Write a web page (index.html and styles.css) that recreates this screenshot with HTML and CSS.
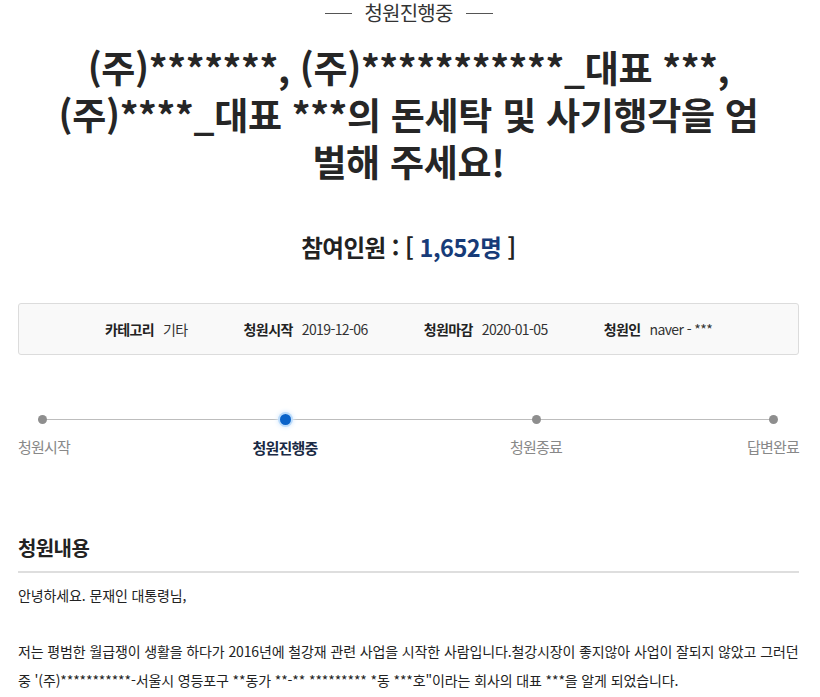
FILE: index.html
```html
<!DOCTYPE html>
<html lang="ko">
<head>
<meta charset="utf-8">
<link rel="stylesheet" href="styles.css">
</head>
<body>
<div class="page">
  <div class="status"><span class="dash"></span><span class="status-text">청원진행중</span><span class="dash"></span></div>
  <h1 class="title">(주)*******, (주)***********_대표 ***,<br>(주)****_대표 ***의 돈세탁 및 사기행각을 엄<br>벌해 주세요!</h1>
  <div class="count">참여인원 : [ <span class="num">1,652명</span> ]</div>
  <div class="info">
    <div class="item"><b>카테고리</b><span>기타</span></div>
    <div class="item"><b>청원시작</b><span>2019-12-06</span></div>
    <div class="item"><b>청원마감</b><span>2020-01-05</span></div>
    <div class="item"><b>청원인</b><span>naver - ***</span></div>
  </div>
  <div class="progress">
    <div class="track"></div>
    <div class="step s1"><i class="dot"></i><span>청원시작</span></div>
    <div class="step s2 on"><i class="dot"></i><span>청원진행중</span></div>
    <div class="step s3"><i class="dot"></i><span>청원종료</span></div>
    <div class="step s4"><i class="dot"></i><span>답변완료</span></div>
  </div>
  <h2 class="section">청원내용</h2>
  <div class="content">
    <p>안녕하세요. 문재인 대통령님,</p>
    <p>저는 평범한 월급쟁이 생활을 하다가 2016년에 철강재 관련 사업을 시작한 사람입니다.철강시장이 좋지않아 사업이 잘되지 않았고 그러던 중 '(주)***********-서울시 영등포구 **동가 **-** ********* *동 ***호"이라는 회사의 대표 ***을 알게 되었습니다.</p>
  </div>
</div>
</body>
</html>
```
FILE: styles.css
```css
html, body { margin: 0; padding: 0; background: #fff; }
body { font-family: "Noto Sans CJK KR", "Noto Sans", sans-serif; color: #222; }
.page { padding: 0 21px 0 18px; }
.status { display: flex; justify-content: center; align-items: center; gap: 13px; height: 20px; padding-top: 3px; padding-bottom: 3px; }
.dash { width: 27px; height: 1px; background: #555; }
.status-text { font-size: 20px; color: #333; letter-spacing: -0.8px; line-height: 20px; }
.title { margin: 18px 0 0; text-align: center; font-size: 37px; line-height: 47px; font-weight: 700; color: #262626; letter-spacing: -0.3px; }
.count { margin-top: 47px; text-align: center; font-size: 23.5px; font-weight: 700; line-height: 30px; color: #222; letter-spacing: -0.5px; }
.count .num { color: #173b78; }
.info { margin-top: 41px; height: 50px; border: 1px solid #dcdcdc; border-radius: 3px; background: #f9f9f9; display: flex; justify-content: center; align-items: center; gap: 56px; font-size: 14px; color: #333; letter-spacing: -0.6px; }
.info .item b { font-weight: 700; margin-right: 9px; color: #222; }
.progress { position: relative; height: 71px; margin-top: 54px; }
.track { position: absolute; left: 25px; right: 25px; top: 10px; height: 1px; background: #bdbdbd; }
.step { position: absolute; top: 0; display: flex; flex-direction: column; align-items: center; font-size: 15px; color: #888; letter-spacing: -0.8px; }
.step .dot { width: 9px; height: 9px; border-radius: 50%; background: #8e8e8e; margin-top: 6px; position: relative; }
.step span { margin-top: 13px; line-height: 20px; }
.s1 { left: 0; align-items: flex-start; }
.s1 .dot { margin-left: 20px; }
.s2 { left: 267px; width: 0; }
.s2 span, .s3 span { white-space: nowrap; }
.s3 { left: 518px; width: 0; }
.s4 { right: 0; align-items: flex-end; }
.s4 .dot { margin-right: 21px; }
.step.on { color: #1a2a45; font-weight: 700; }
.step.on .dot { width: 11px; height: 11px; margin-top: 5px; background: #0a63c9; box-shadow: 0 0 0 2px #bcdcfb, 0 0 4px 3px #e1effd; }
.section { margin: 53px 0 0; font-size: 20px; font-weight: 700; color: #222; line-height: 30px; padding-bottom: 8px; border-bottom: 2px solid #dedede; letter-spacing: -0.6px; }
.content { font-size: 14px; line-height: 29px; color: #222; letter-spacing: -0.12px; padding-top: 8px; }
.content p { margin: 0 0 27px; }
```
